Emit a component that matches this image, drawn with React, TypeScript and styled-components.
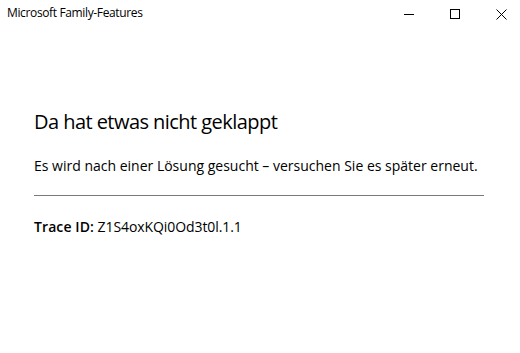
import React from "react";
import styled, { createGlobalStyle } from "styled-components";

const Global = createGlobalStyle`
  html, body { margin: 0; padding: 0; background: #ffffff; }
  body { font-family: "Segoe UI", "Open Sans", "Noto Sans", sans-serif; color: #000; }
`;

const Window = styled.div`
  width: 520px;
  height: 353px;
  background: #fff;
  display: flex;
  flex-direction: column;
  overflow: hidden;
`;

const TitleBar = styled.div`
  height: 28px;
  display: flex;
  align-items: flex-start;
  justify-content: space-between;
`;

const TitleText = styled.div`
  font-size: 12px;
  line-height: 16px;
  padding: 5px 0 0 7px;
  color: #000;
  letter-spacing: -0.36px;
`;

const Controls = styled.div`
  display: flex;
  margin-right: -4px;
`;

const CtrlButton = styled.div`
  width: 46px;
  height: 28px;
  display: flex;
  align-items: center;
  justify-content: center;
`;

const Content = styled.div`
  padding: 80px 36px 0 34px;
  display: flex;
  flex-direction: column;
`;

const Heading = styled.h1`
  margin: 0;
  font-size: 20px;
  font-weight: 400;
  line-height: 28px;
  letter-spacing: -0.55px;
`;

const Message = styled.p`
  margin: 20px 0 0;
  font-size: 14px;
  line-height: 20px;
  letter-spacing: 0;
`;

const Divider = styled.hr`
  margin: 19px 0 0;
  border: none;
  height: 1px;
  background: #7a7a7a;
`;

const Trace = styled.p`
  margin: 21px 0 0;
  font-size: 14px;
  line-height: 20px;
  letter-spacing: -0.08px;
`;

const Label = styled.span`
  font-weight: 600;
  letter-spacing: 0.1px;
`;

export default function App() {
  return (
    <>
      <Global />
      <Window>
        <TitleBar>
          <TitleText>Microsoft Family-Features</TitleText>
          <Controls>
            <CtrlButton>
              <svg width="10" height="10" viewBox="0 0 10 10">
                <path d="M0 5.5H10" stroke="#000" strokeWidth="1" />
              </svg>
            </CtrlButton>
            <CtrlButton>
              <svg width="10" height="10" viewBox="0 0 10 10">
                <rect x="0.5" y="0.5" width="9" height="9" fill="none" stroke="#000" strokeWidth="1" />
              </svg>
            </CtrlButton>
            <CtrlButton>
              <svg width="11" height="11" viewBox="0 0 11 11">
                <path d="M0.5 0.5L10.5 10.5M10.5 0.5L0.5 10.5" stroke="#000" strokeWidth="1" />
              </svg>
            </CtrlButton>
          </Controls>
        </TitleBar>
        <Content>
          <Heading>Da hat etwas nicht geklappt</Heading>
          <Message>Es wird nach einer Lösung gesucht – versuchen Sie es später erneut.</Message>
          <Divider />
          <Trace>
            <Label>Trace ID:</Label> Z1S4oxKQi0Od3t0l.1.1
          </Trace>
        </Content>
      </Window>
    </>
  );
}
